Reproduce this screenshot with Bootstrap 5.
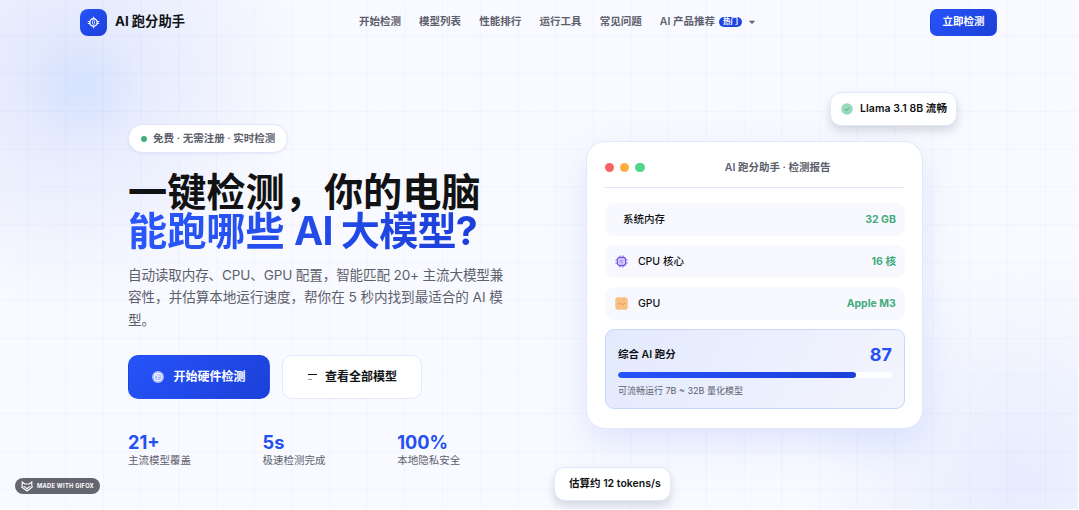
<!DOCTYPE html>
<html lang="zh-CN">
<head>
  <meta charset="UTF-8">
  <title>AI 跑分助手</title>
  <meta name="viewport" content="width=device-width, initial-scale=1">
  <!-- Bootstrap CSS -->
  <link href="https://cdn.jsdelivr.net/npm/bootstrap@5.3.3/dist/css/bootstrap.min.css" rel="stylesheet">
  <style>
    :root {
      --ink: #111214;
      --soft: #5d5f6d;
      --blue: #2450f0;
      --green: #43ab7c;
      --line: #e2e7fb;
      --grad: linear-gradient(135deg, #2653fa, #1c40d8);
    }
    body {
      width: 1079px;
      height: 510px;
      overflow: hidden;
      background: #fff;
      color: var(--ink);
      font-family: Inter, "Noto Sans CJK SC", sans-serif;
      font-size: 10.5px;
      line-height: 1.5;
    }
    .page {
      width: 1078px;
      height: 509px;
      overflow: hidden;
      background:
        linear-gradient(rgba(75, 95, 240, .045) 1px, transparent 1px) 0 -2.5px / 37.8px 37.8px,
        linear-gradient(90deg, rgba(75, 95, 240, .045) 1px, transparent 1px) -10.2px 0 / 37.7px 37.7px,
        radial-gradient(circle at 83px 90px, rgba(208, 224, 255, .6), transparent 60px),
        radial-gradient(circle at 70px 75px, rgba(216, 225, 252, .8), transparent 235px),
        radial-gradient(circle at 1020px 480px, rgba(224, 232, 254, .75), transparent 220px),
        #f9faff;
    }

    /* top bar */
    .topbar { height: 44px; padding: 0 81px 0 80px; }
    .logo-box { width: 27px; height: 27px; border-radius: 8px; background: var(--grad); }
    .brand-name { font-size: 13.3px; font-weight: 700; margin-left: 8px; }
    .menu { gap: 18.2px; color: var(--soft); font-weight: 600; margin-left: 0; }
    .hot { width: 23px; height: 10px; border-radius: 5px; background: #1f45e0; color: #fff; font-size: 7.5px; font-weight: 700; line-height: 10px; text-align: center; margin: 0 6px 0 4px; }
    .btn-top { width: 67px; height: 27px; padding: 0; border-radius: 7px; background: var(--grad); color: #fff; font-size: 10.5px; font-weight: 600; }

    /* hero */
    .hero { padding-left: 128px; }
    .intro { width: 376px; padding-top: 80px; }
    .pill { width: 160px; height: 29px; border-radius: 15px; border: 1px solid var(--line); background: #fff; color: var(--soft); font-weight: 600; padding-left: 12px; box-shadow: 0 1px 3px rgba(60, 80, 180, .08); }
    .pill i { width: 6px; height: 6px; border-radius: 50%; background: var(--green); margin-right: 6px; }
    h1 { font-size: 39.2px; line-height: 39px; font-weight: 700; margin: 19px 0 0; white-space: nowrap; }
    h1 span { background: linear-gradient(90deg, #2b57fb, #1c40d8); -webkit-background-clip: text; color: transparent; }
    h1 em { font-style: normal; letter-spacing: -.9px; }
    .desc { font-size: 13.6px; line-height: 22.3px; letter-spacing: -.16px; color: var(--soft); margin: 14px 0 0; white-space: nowrap; }
    .desc span { letter-spacing: -.05px; }
    .btn-hero { height: 44px; border-radius: 10px; font-size: 12px; font-weight: 600; padding: 0; }
    .btn-start { width: 142px; background: var(--grad); color: #fff; }
    .btn-start svg { margin-right: 9px; }
    .btn-list { width: 140px; background: #fff; border: 1px solid var(--line); color: var(--ink); }
    .buttons { gap: 12px; }
    .stats { margin-top: 32px; }
    .stat { flex: 0 0 134.6px; }
    .stat b { display: block; font-size: 18.2px; line-height: 22px; color: var(--blue); }
    .stat span { display: block; line-height: 16px; color: var(--soft); }

    /* report */
    .report { width: 337px; height: 288px; margin: 97px 0 0 82.4px; padding: 0 17.5px; background: #fff; border: 1px solid var(--line); border-radius: 19px; box-shadow: 0 14px 38px rgba(60, 110, 240, .15); }
    .report-head { height: 46px; padding-top: 6px; border-bottom: 1px solid var(--line); }
    .dots { gap: 6px; }
    .dots i { width: 9.3px; height: 9.3px; border-radius: 50%; }
    .report-title { color: var(--soft); font-weight: 600; margin-left: 80px; }
    .specs { padding-top: 15px; }
    .spec { height: 33px; border-radius: 9px; background: #f8f9fe; margin-bottom: 9px; padding: 0 9px 0 10px; font-weight: 500; }
    .spec svg { margin-right: 10px; }
    .spec strong { color: var(--green); font-weight: 700; }
    .score { height: 80px; border: 1px solid #c8d7fb; border-radius: 9px; background: linear-gradient(120deg, #e3eafd, #f3f4fe); padding: 11px 12px 0; }
    .score b { font-size: 18px; line-height: 27px; color: var(--blue); }
    .track { height: 6px; border-radius: 3px; background: #fff; margin: 4px 0 6px; }
    .track .progress-bar { background: linear-gradient(90deg, #2653fa, #1c40d8); border-radius: 3px; }
    .score small { display: block; font-size: 9px; line-height: 14px; color: var(--soft); }

    /* chips floating over the hero */
    .chip { height: 34px; background: #fff; border: 1px solid var(--line); border-radius: 11px; font-weight: 600; box-shadow: 0 5px 10px rgba(30, 35, 60, .16); white-space: nowrap; }
    .chip-model { left: 830px; top: 92px; width: 127px; padding-left: 10px; letter-spacing: .06px; }
    .chip-model svg { margin-right: 7px; }
    .chip-speed { left: 554px; top: 467px; width: 117px; padding-left: 14px; }
    .gifox { left: 15px; top: 478px; width: 85px; height: 16px; border-radius: 8px; background: #65656f; color: #fff; font-size: 5.7px; font-weight: 700; letter-spacing: .28px; padding-left: 6px; white-space: nowrap; }
  </style>
</head>
<body>

<div class="page position-relative">
  <!-- Navigation -->
  <nav class="topbar d-flex align-items-center justify-content-between">
    <div class="d-flex align-items-center">
      <span class="logo-box d-flex align-items-center justify-content-center">
        <svg width="13" height="13" viewBox="0 0 13 13" fill="none" stroke="#fff">
          <circle cx="6.5" cy="6.5" r="3.7" stroke-width="1.4"/>
          <path d="M6.5 .8v2M6.5 10.2v2M.8 5.5h2M.8 7.5h2M10.2 5.5h2M10.2 7.5h2" stroke-width="1.1"/>
          <rect x="5.5" y="4.7" width="2" height="3.6" rx=".8" stroke-width=".8"/>
        </svg>
      </span>
      <span class="brand-name">AI 跑分助手</span>
    </div>
    <div class="menu d-flex align-items-center">
      <span>开始检测</span>
      <span>模型列表</span>
      <span>性能排行</span>
      <span>运行工具</span>
      <span>常见问题</span>
      <span class="d-flex align-items-center">AI 产品推荐<span class="hot">热门</span>
        <svg width="8" height="5" viewBox="0 0 8 5"><path d="M.8.8h6.4L4 4z" fill="#5d5f6d"/></svg>
      </span>
    </div>
    <button class="btn btn-top">立即检测</button>
  </nav>

  <!-- Hero -->
  <main class="hero d-flex align-items-start">
    <section class="intro">
      <div class="pill d-flex align-items-center"><i></i>免费 · 无需注册 · 实时检测</div>
      <h1>一键检测，你的电脑<br><span>能跑哪些 <em>AI 大模型?</em></span></h1>
      <p class="desc">自动读取内存、CPU、GPU 配置，智能匹配 20+ 主流大模型兼<br><span>容性，并估算本地运行速度，帮你在 5 秒内找到最适合的 AI 模</span><br>型。</p>
      <div class="buttons d-flex mt-4">
        <button class="btn btn-hero btn-start d-flex align-items-center justify-content-center">
          <svg width="12" height="12" viewBox="0 0 12 12" fill="none" stroke="#fff">
            <circle cx="6" cy="6" r="6" fill="#a9b9fa" stroke="none"/>
            <circle cx="6" cy="6" r="4" stroke-width=".9"/>
            <path d="M4 4.2c2-1 4 .2 4 2M4.2 6.6c.6 1.4 1.8 1.6 2.6 1M3 3l3.2 3.2" stroke-width=".9"/>
          </svg>开始硬件检测
        </button>
        <button class="btn btn-hero btn-list d-flex align-items-center justify-content-center">
          <svg class="me-2" width="10" height="10" viewBox="0 0 10 10">
            <path d="M1 2.5h9" stroke="#111214"/>
            <path d="M1 7.5h4" stroke="#9a9ba3"/>
          </svg>查看全部模型
        </button>
      </div>
      <div class="stats d-flex">
        <div class="stat"><b>21+</b><span>主流模型覆盖</span></div>
        <div class="stat"><b>5s</b><span>极速检测完成</span></div>
        <div class="stat"><b>100%</b><span>本地隐私安全</span></div>
      </div>
    </section>

    <!-- Report card -->
    <section class="report">
      <div class="report-head d-flex align-items-center">
        <div class="dots d-flex">
          <i style="background:#f76464"></i><i style="background:#fbaf43"></i><i style="background:#52d68c"></i>
        </div>
        <span class="report-title">AI 跑分助手 · 检测报告</span>
      </div>
      <div class="specs">
        <div class="spec d-flex align-items-center justify-content-between"><span class="ps-2">系统内存</span><strong>32 GB</strong></div>
        <div class="spec d-flex align-items-center justify-content-between">
          <span class="d-flex align-items-center">
            <svg width="13" height="13" viewBox="0 0 13 13" fill="none" stroke="#7355ea">
              <path d="M5 .5v2M8 .5v2M5 10.5v2M8 10.5v2M.5 5h2M.5 8h2M10.5 5h2M10.5 8h2"/>
              <rect x="2.5" y="2.5" width="8" height="8" rx="2" fill="#e7e1fe" stroke-width="1.3"/>
              <rect x="4.5" y="4.5" width="4" height="4" fill="#b5a3fa" stroke="none"/>
            </svg>CPU 核心
          </span>
          <strong>16 核</strong>
        </div>
        <div class="spec d-flex align-items-center justify-content-between">
          <span class="d-flex align-items-center">
            <svg width="13" height="13" viewBox="0 0 13 13">
              <rect x=".3" y=".3" width="12.4" height="12.4" rx="2.5" fill="#f7c184"/>
              <path d="M3 7.5l1.6-1.5 1.2 1.3M7 6.8l1.3.6L10 5.8" fill="none" stroke="#e8923c"/>
            </svg>GPU
          </span>
          <strong>Apple M3</strong>
        </div>
      </div>
      <div class="score">
        <div class="d-flex align-items-center justify-content-between"><span class="fw-semibold">综合 AI 跑分</span><b>87</b></div>
        <div class="track progress"><div class="progress-bar" style="width:87%"></div></div>
        <small>可流畅运行 7B ~ 32B 量化模型</small>
      </div>
    </section>
  </main>

  <!-- Floating chips -->
  <div class="chip chip-model position-absolute d-flex align-items-center">
    <svg width="12" height="12" viewBox="0 0 12 12"><circle cx="6" cy="6" r="5.8" fill="#97d9bb"/><path d="M4 6.2l1.4 1.3L8 4.8" fill="none" stroke="#43a078"/></svg>Llama 3.1 8B 流畅
  </div>
  <div class="chip chip-speed position-absolute d-flex align-items-center">估算约 12 tokens/s</div>
  <div class="gifox position-absolute d-flex align-items-center">
    <svg class="me-1" width="12" height="11" viewBox="0 0 12 11" fill="none" stroke="#fff" stroke-width="1.1">
      <path d="M1.2 1l2.6 2h4.4l2.6-2v3.5l.5 1.5L6 10 .7 6l.5-1.5z"/>
      <path d="M2.5 5.5l2 .7L6 8l1.5-1.8 2-.7"/>
    </svg>MADE WITH GIFOX
  </div>
</div>

<script src="https://cdn.jsdelivr.net/npm/bootstrap@5.3.3/dist/js/bootstrap.bundle.min.js"></script>
</body>
</html>
